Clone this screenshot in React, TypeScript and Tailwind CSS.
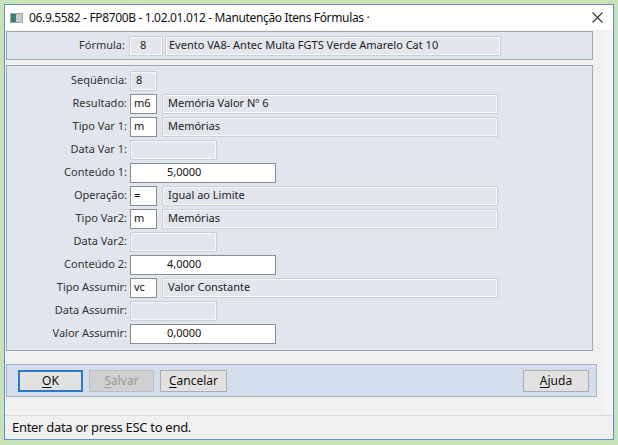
import React from "react";

const font = { fontFamily: '"Noto Sans", "Open Sans", Arial, sans-serif' };

type Row = {
  label: string;
  code?: string;
  desc?: string;
  kind: "code" | "date" | "value" | "seq";
  value?: string;
};

const rows: Row[] = [
  { label: "Seqüência:", kind: "seq", value: "8" },
  { label: "Resultado:", kind: "code", code: "m6", desc: "Memória Valor Nº 6" },
  { label: "Tipo Var 1:", kind: "code", code: "m", desc: "Memórias" },
  { label: "Data Var 1:", kind: "date" },
  { label: "Conteúdo 1:", kind: "value", value: "5,0000" },
  { label: "Operação:", kind: "code", code: "=", desc: "Igual ao Limite" },
  { label: "Tipo Var2:", kind: "code", code: "m", desc: "Memórias" },
  { label: "Data Var2:", kind: "date" },
  { label: "Conteúdo 2:", kind: "value", value: "4,0000" },
  { label: "Tipo Assumir:", kind: "code", code: "vc", desc: "Valor Constante" },
  { label: "Data Assumir:", kind: "date" },
  { label: "Valor Assumir:", kind: "value", value: "0,0000" },
];

const readonlyBox =
  "h-[20px] flex items-center bg-[#e3e6ed] border border-[#cbcfd6] shadow-[inset_1px_1px_0_#f6f7f9,inset_-1px_-1px_0_#f6f7f9] text-[11px] text-[#222]";
const whiteBox =
  "h-[20px] flex items-center bg-white border border-[#8a8d92] text-[11px] text-[#111]";

function Field({ row }: { row: Row }) {
  return (
    <div className="flex items-center h-[23px]">
      <div className="w-[123px] text-right text-[11px] text-[#333] pr-[3px]">{row.label}</div>
      {row.kind === "seq" && (
        <div className={`${readonlyBox} w-[27px] pl-[5px]`}>{row.value}</div>
      )}
      {row.kind === "code" && (
        <div className="flex items-center gap-[5px]">
          <div className={`${whiteBox} w-[27px] pl-[3px]`}>{row.code}</div>
          <div className={`${readonlyBox} w-[336px] pl-[5px]`}>{row.desc}</div>
        </div>
      )}
      {row.kind === "date" && <div className={`${readonlyBox} w-[87px]`} />}
      {row.kind === "value" && (
        <div className={`${whiteBox} w-[146px] pl-[36px]`}>{row.value}</div>
      )}
    </div>
  );
}

function Btn({
  first,
  rest,
  focused,
  disabled,
  w,
}: {
  first: string;
  rest: string;
  focused?: boolean;
  disabled?: boolean;
  w: string;
}) {
  return (
    <div
      className={`${w} h-[22px] flex items-center justify-center text-[12px] ${
        focused
          ? "border-2 border-[#2f78c8] bg-[#e1e1e1] text-[#111]"
          : disabled
          ? "border border-[#bfbfbf] bg-[#cfd0d2] text-[#9a9a9a]"
          : "border border-[#adadad] bg-[#e1e1e1] text-[#111]"
      }`}
    >
      <span className="underline underline-offset-2">{first}</span>
      <span>{rest}</span>
    </div>
  );
}

export default function App() {
  return (
    <div className="w-[618px] h-[445px] bg-[#c8e1b6] pt-[4px] pl-[4px]" style={font}>
      <div className="w-[610px] h-[436px] border border-[#5d8fd2] bg-[#f0f0f0] flex flex-col">
        {/* title bar */}
        <div className="h-[25px] bg-white flex items-center pl-[5px] shrink-0">
          <div className="w-[13px] h-[10px] bg-[#c3cccf] border border-[#9aa5a9] flex">
            <div className="w-[5px] h-full bg-[#3d7f6e]" />
          </div>
          <div className="ml-[6px] text-[12px] text-[#111] tracking-[-0.35px]">
            06.9.5582 - FP8700B - 1.02.01.012 - Manutenção Itens Fórmulas ·
          </div>
          <svg className="ml-auto mr-[10px]" width="11" height="11" viewBox="0 0 11 11">
            <path d="M0.5 0.5 L10.5 10.5 M10.5 0.5 L0.5 10.5" stroke="#333" strokeWidth="1.1" />
          </svg>
        </div>

        <div className="flex flex-1">
          <div className="w-[591px] pl-[1px] flex flex-col">
            {/* Fórmula panel */}
            <div className="mt-[1px] w-[587px] h-[29px] bg-[#e1e5ee] border border-[#a3a7ae] flex items-center">
              <div className="w-[122px] text-right text-[11px] text-[#333] pr-[4px]">Fórmula:</div>
              <div className={`${readonlyBox} w-[34px] pl-[10px]`}>8</div>
              <div className={`${readonlyBox} ml-[2px] w-[336px] pl-[3px]`}>
                Evento VA8- Antec Multa FGTS Verde Amarelo Cat 10
              </div>
            </div>

            {/* main panel */}
            <div className="mt-[5px] w-[587px] h-[286px] bg-[#e1e5ee] border border-[#a3a7ae] pt-[3px]">
              {rows.map((r) => (
                <Field key={r.label} row={r} />
              ))}
            </div>

            {/* button bar */}
            <div className="mt-[13px] w-[591px] h-[33px] bg-[#d4ddeb] border border-[#a9b2c0] flex items-center pl-[11px] pr-[7px] gap-[6px]">
              <Btn first="O" rest="K" focused w="w-[65px]" />
              <Btn first="S" rest="alvar" disabled w="w-[65px]" />
              <Btn first="C" rest="ancelar" w="w-[67px]" />
              <div className="ml-auto">
                <Btn first="A" rest="juda" w="w-[66px]" />
              </div>
            </div>
          </div>
          <div className="flex-1 flex">
            <div className="w-[9px]" />
            <div className="flex-1 bg-[#f4f4f4]" />
          </div>
        </div>

        {/* status bar */}
        <div className="h-[24px] border-t border-[#d9d9d9] bg-[#f0f0f0] flex items-center pl-[7px] text-[13px] text-[#111] tracking-[-0.3px] shrink-0">
          Enter data or press ESC to end.
        </div>
      </div>
    </div>
  );
}
